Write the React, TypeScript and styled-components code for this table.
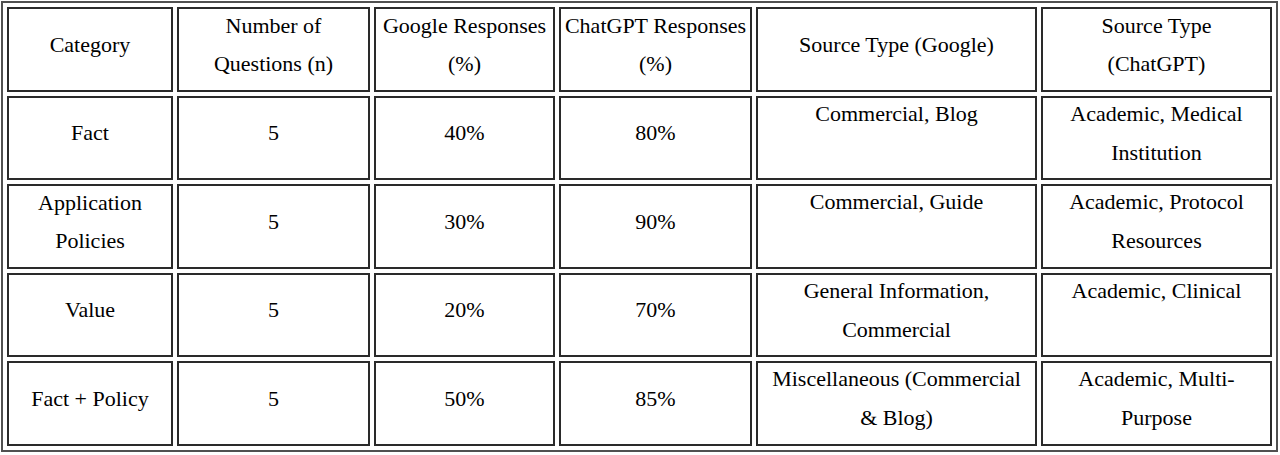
import React from "react";
import styled, { createGlobalStyle } from "styled-components";

const GlobalStyle = createGlobalStyle`
  html, body {
    margin: 0;
    padding: 0;
    background: #ffffff;
  }
  body {
    font-family: "Liberation Serif", "Times New Roman", serif;
    color: #000000;
  }
`;

const Page = styled.div`
  padding: 1px 0 0 1px;
`;

const Table = styled.table`
  border-collapse: separate;
  border-spacing: 4px;
  border: 2px solid #505050;
  table-layout: fixed;
  width: 1277px;
  font-family: "Liberation Serif", "Times New Roman", serif;
  font-size: 22px;
  line-height: 38.5px;
  color: #000000;
`;

const Row = styled.tr<{ $h: number }>`
  height: ${(p) => p.$h}px;
`;

const cellBase = `
  border: 2px solid #2a2a2a;
  text-align: center;
  font-weight: 400;
  box-sizing: border-box;
`;

const HeadCell = styled.th<{ $pad: number }>`
  ${cellBase}
  vertical-align: middle;
  padding: 0 ${(p) => p.$pad}px;
`;

const Cell = styled.td<{ $pad: number; $top?: boolean }>`
  ${cellBase}
  vertical-align: ${(p) => (p.$top ? "top" : "middle")};
  padding: 0 ${(p) => p.$pad}px;
`;

const CellText = styled.div`
  margin: -3px 0 6px;
`;

const widths = [166, 193, 181, 193, 281, 231];
const pads = [2, 3, 2, 2, 10, 10];

const headers = [
  "Category",
  "Number of Questions (n)",
  "Google Responses (%)",
  "ChatGPT Responses (%)",
  "Source Type (Google)",
  "Source Type (ChatGPT)",
];

const rows: { cells: string[]; h: number }[] = [
  { cells: ["Fact", "5", "40%", "80%", "Commercial, Blog", "Academic, Medical Institution"], h: 84 },
  { cells: ["Application Policies", "5", "30%", "90%", "Commercial, Guide", "Academic, Protocol Resources"], h: 85 },
  { cells: ["Value", "5", "20%", "70%", "General Information, Commercial", "Academic, Clinical"], h: 84 },
  { cells: ["Fact + Policy", "5", "50%", "85%", "Miscellaneous (Commercial & Blog)", "Academic, Multi-Purpose"], h: 85 },
];

export default function App() {
  return (
    <Page>
      <GlobalStyle />
      <Table>
        <colgroup>
          {widths.map((w, i) => (
            <col key={i} style={{ width: w }} />
          ))}
        </colgroup>
        <thead>
          <Row $h={85}>
            {headers.map((h, i) => (
              <HeadCell key={i} $pad={pads[i]}>
                <CellText>{h}</CellText>
              </HeadCell>
            ))}
          </Row>
        </thead>
        <tbody>
          {rows.map((r, ri) => (
            <Row key={ri} $h={r.h}>
              {r.cells.map((c, ci) => (
                <Cell key={ci} $pad={pads[ci]} $top={ci >= 4}>
                  <CellText>{c}</CellText>
                </Cell>
              ))}
            </Row>
          ))}
        </tbody>
      </Table>
    </Page>
  );
}
